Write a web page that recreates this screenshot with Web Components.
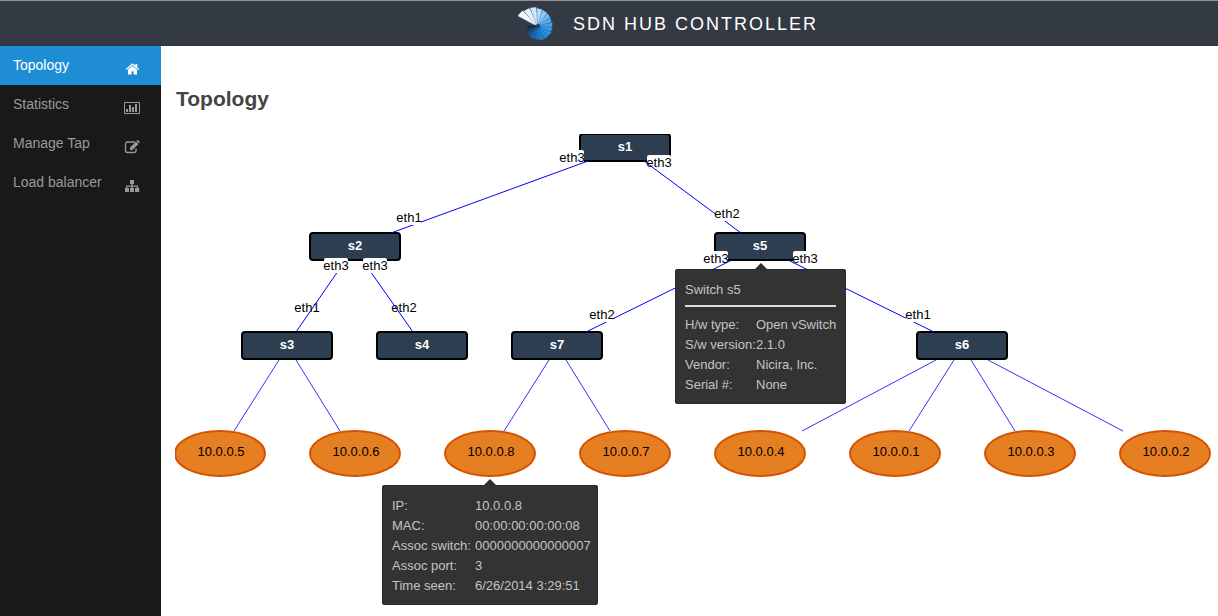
<!DOCTYPE html>
<html lang="en">
<head>
<meta charset="utf-8">
<title>SDN Hub Controller</title>
<style>
  html, body { margin: 0; min-height: 100%; }
  body { font-family: "Liberation Sans", Arial, sans-serif; font-size: 14px; background: #fff; }
</style>
</head>
<body>
<sdn-app></sdn-app>

<template id="app-t">
  <style>
    :host { display: flex; flex-direction: column; min-height: 100vh; }
    .body { display: flex; flex: 1; }
    sdn-nav { flex: none; width: 161px; }
    main { flex: 1; min-width: 0; padding: 41px 0 0 14px; }
    h1 { margin: 0 1px 23px; font-size: 21px; line-height: 24px; color: #444; }
  </style>
  <sdn-header>SDN HUB CONTROLLER</sdn-header>
  <div class="body">
    <sdn-nav>
      <sdn-nav-item icon="home" active>Topology</sdn-nav-item>
      <sdn-nav-item icon="chart">Statistics</sdn-nav-item>
      <sdn-nav-item icon="edit">Manage Tap</sdn-nav-item>
      <sdn-nav-item icon="tree">Load balancer</sdn-nav-item>
    </sdn-nav>
    <main>
      <h1>Topology</h1>
      <topology-graph>
        <node-tip slot="tips" style="left:500px;top:135px" heading="Switch s5" label-width="71" rows='[["H/w type:","Open vSwitch"],["S/w version:","2.1.0"],["Vendor:","Nicira, Inc."],["Serial #:","None"]]'></node-tip>
        <node-tip slot="tips" style="left:207px;top:351px" label-width="83" rows='[["IP:","10.0.0.8"],["MAC:","00:00:00:00:00:08"],["Assoc switch:","0000000000000007"],["Assoc port:","3"],["Time seen:","6/26/2014 3:29:51"]]'></node-tip>
      </topology-graph>
    </main>
  </div>
</template>

<template id="header-t">
  <style>
    :host { display: block; }
    header { box-sizing: border-box; height: 46px; display: flex; align-items: center; justify-content: center; gap: 19px;
      background: #333a44; border-top: 1px solid #8f8f8f; border-bottom: 1px solid #33343a; color: #fff;
      font-size: 18px; letter-spacing: 2px; padding: 2px 0 0 118px; }
    svg { display: block; width: 36px; height: 36px; }
  </style>
  <header>
    <svg viewBox="0 0 36 36" aria-hidden="true"></svg>
    <span><slot></slot></span>
  </header>
</template>

<template id="nav-t">
  <style>
    :host { display: block; background: #191919; }
    nav { display: flex; flex-direction: column; }
  </style>
  <nav><slot></slot></nav>
</template>

<template id="nav-item-t">
  <style>
    :host { display: block; }
    a { display: flex; justify-content: space-between; box-sizing: border-box; height: 39px; padding: 10px 21px 0 13px;
      line-height: 18px; color: #999; text-decoration: none; }
    :host([active]) a { background: #1f8dd6; color: #fff; }
    svg { width: 16px; height: 14px; margin-top: 6px; fill: currentColor; }
  </style>
  <a href="#"><slot></slot><svg viewBox="0 0 16 14" aria-hidden="true"></svg></a>
</template>

<template id="graph-t">
  <style>
    :host { display: block; position: relative; }
    svg { display: block; width: 100%; height: 343px; font-size: 13px; }
    .link { stroke: #00f; stroke-width: 1; }
    .host-link { opacity: .8; }
    .switch rect { fill: #2c3e50; stroke: #000; stroke-width: 2; }
    .switch text { fill: #fff; font-weight: bold; }
    .host rect { fill: #e67e22; stroke: #d35400; stroke-width: 2; }
    text { text-anchor: middle; fill: #000; }
    .port rect { fill: #fff; }
  </style>
  <svg role="img" aria-label="Network topology"></svg>
  <slot name="tips"></slot>
</template>

<template id="tip-t">
  <style>
    :host { display: block; position: absolute; box-sizing: border-box; min-width: 171px; padding: 11px 7px 9px 10px; background: #333;
      box-shadow: inset 0 0 0 1px #2a2a2a; border-radius: 3px; color: #c4c4c4; font-size: 13px; line-height: 20px; white-space: nowrap; }
    :host::before { content: ""; position: absolute; left: 50%; top: -6px; margin-left: -7px;
      border: 7px solid transparent; border-top: 0; border-bottom-color: #2e2e2e; }
    .heading { height: 20px; padding-bottom: 5px; margin: 0 3px 8px 0; border-bottom: 2px solid #ddd; }
    table { border-collapse: collapse; }
    th, td { padding: 0; font-weight: normal; text-align: left; }
  </style>
</template>

<script>
const NS = 'http://www.w3.org/2000/svg';
class Base extends HTMLElement {
  mount(id) {
    const root = this.attachShadow({ mode: 'open' });
    root.append(document.getElementById(id).content.cloneNode(true));
    return root;
  }
}

const svgEl = (tag, attrs, text) => {
  const el = document.createElementNS(NS, tag);
  for (const k in attrs) el.setAttribute(k, attrs[k]);
  if (text) el.textContent = text;
  return el;
};

customElements.define('sdn-header', class extends Base {
  constructor() {
    super();
    const svg = this.mount('header-t').querySelector('svg');
    // Fan of blades turning round one hub: [colour, radius], clockwise from the upper left.
    const blades = [['#f2f8fd', 23], ['#e6f2fc', 21], ['#d0e8fb', 20], ['#b0daf9', 18], ['#8ccaf7', 17],
      ['#6cbaf4', 16], ['#55adf1', 15], ['#45a3ee', 15], ['#389aea', 15], ['#2e91e4', 15], ['#2688dc', 15],
      ['#2080d4', 15], ['#1c76c8', 14], ['#1a68b4', 14], ['#195592', 13], ['#193e6a', 13], ['#182844', 12]];
    const hub = [20, 20];
    blades.forEach(([fill, r], i) => {
      const a = (-154 + i * 20) * Math.PI / 180;
      const at = (ang, rad) => (hub[0] + rad * Math.cos(ang)).toFixed(1) + ',' + (hub[1] + rad * Math.sin(ang)).toFixed(1);
      svg.append(svgEl('polygon', { points: [at(a - .3, 2), at(a, r), at(a + .33, r - 1), at(a + .6, 2)].join(' '),
        fill, stroke: '#2b5078', 'stroke-width': '.3' }));
    });
    svg.append(svgEl('circle', { cx: hub[0], cy: hub[1], r: 2, fill: '#16437a' }));
  }
});

customElements.define('sdn-nav', class extends Base {
  constructor() { super(); this.mount('nav-t'); }
});

const ICONS = {
  home: '<path d="M8.500 3.900 13 7.600V12a.6.6 0 0 1-.6.6H9.600V9.300H7.500v3.300H4.600a.6.6 0 0 1-.6-.6V7.600z"/><path d="M8.500 1.200 11.500 3.600V2h1.800v3.200L15.300 7 14.500 8 8.500 3 2.600 8l-.8-1L7.700 1.800Q8.500 1.100 9.200 1.800"/>',
  chart: '<path fill-rule="evenodd" d="M1 1h14a1 1 0 0 1 1 1v10a1 1 0 0 1-1 1H1a1 1 0 0 1-1-1V2a1 1 0 0 1 1-1zm0 1v10h14V2z"/><path d="M2 8h2v3H2zM5 4h2v7H5zM8 6h2v5H8zM11 3h2v8h-2z"/>',
  edit: '<path d="M11 2H3.500a2 2 0 0 0-2 2v6.500a2 2 0 0 0 2 2h6.500a2 2 0 0 0 2-2V8.500" fill="none" stroke="currentColor" stroke-width="1.300"/><path d="M6 7.500 12 1.500 14.500 4 8.500 10H6zM12.500 1l.8-.7q.5-.4 1 0l1.200 1.200q.4.500 0 1l-.6.800z"/>',
  tree: '<path d="M6 1h4v4H8.700v1.500H13.200a1 1 0 0 1 1 1V9h1v4h-4.200V9h1.800V7.800H8.700V9H10v4H6V9h1.300V7.800H3.300V9H5v4H1V9h1V7.500a1 1 0 0 1 1-1h4.300V5H6z"/>'
};
customElements.define('sdn-nav-item', class extends Base {
  constructor() { super(); this.mount('nav-item-t'); }
  connectedCallback() {
    this.shadowRoot.querySelector('svg').innerHTML = ICONS[this.getAttribute('icon')];
  }
});

customElements.define('topology-graph', class extends Base {
  constructor() {
    super();
    const svg = this.mount('graph-t').querySelector('svg');
    const link = (cls, [x1, y1, x2, y2]) => svg.append(svgEl('line', { class: cls, x1, y1, x2, y2 }));
    const group = (cls, rect, x, y, label) => {
      const g = svgEl('g', { class: cls });
      if (rect) g.append(svgEl('rect', rect));
      g.append(svgEl('text', { x, y }, label));
      svg.append(g);
    };
    const port = ([label, x, y]) =>
      group('port', { x: x - 12, y: y - 12, width: 24, height: 15, rx: 2 }, x, y, label);

    const switches = [['s1', 450, 0], ['s2', 180, 99], ['s5', 585, 99], ['s3', 112, 198],
      ['s4', 247, 198], ['s7', 382, 198], ['s6', 787, 198]];
    const hosts = ['10.0.0.5', '10.0.0.6', '10.0.0.8', '10.0.0.7', '10.0.0.4', '10.0.0.1', '10.0.0.3', '10.0.0.2'];
    const trunks = [[413, 27, 216, 99], [469, 27, 566, 99], [170, 127, 121, 198], [188, 127, 238, 198],
      [557, 126, 411, 198], [613, 126, 759, 198]];
    const edges = [[104, 226, 59, 297], [121, 226, 165, 297], [374, 226, 329, 297], [391, 226, 435, 297],
      [761, 226, 627, 297], [779, 226, 734, 297], [796, 226, 840, 297], [813, 226, 948, 297]];
    // Port labels that the trunk lines cross, and those that cover the lines.
    const portsUnder = [['eth3', 397, 28], ['eth3', 484, 33], ['eth3', 541, 129], ['eth3', 630, 129],
      ['eth1', 132, 178], ['eth2', 229, 178]];
    const portsOver = [['eth2', 552, 84], ['eth1', 234, 88], ['eth3', 161, 136], ['eth3', 200, 136],
      ['eth2', 427, 185], ['eth1', 743, 185]];

    for (const [label, x, y] of switches)
      group('switch', { x: x - 45, y, width: 90, height: 27, rx: 3 }, x, y + 17, label);
    hosts.forEach((label, i) => {
      const x = 45 + i * 135;
      group('host', { x: x - 45, y: 297, width: 90, height: 45, rx: 45, ry: 23 }, x + 1, 322, label);
    });
    portsUnder.forEach(port);
    trunks.forEach(p => link('link', p));
    edges.forEach(p => link('link host-link', p));
    portsOver.forEach(port);
  }
});

customElements.define('node-tip', class extends Base {
  constructor() { super(); this.mount('tip-t'); }
  connectedCallback() {
    const heading = this.getAttribute('heading');
    if (heading) {
      const div = document.createElement('div');
      div.className = 'heading';
      div.textContent = heading;
      this.shadowRoot.append(div);
    }
    const table = document.createElement('table');
    for (const [name, value] of JSON.parse(this.getAttribute('rows'))) {
      const tr = table.insertRow();
      const th = document.createElement('th');
      th.scope = 'row';
      th.style.minWidth = this.getAttribute('label-width') + 'px';
      th.textContent = name;
      tr.append(th);
      tr.insertCell().textContent = value;
    }
    this.shadowRoot.append(table);
  }
});

customElements.define('sdn-app', class extends Base {
  constructor() { super(); this.mount('app-t'); }
});
</script>
</body>
</html>
